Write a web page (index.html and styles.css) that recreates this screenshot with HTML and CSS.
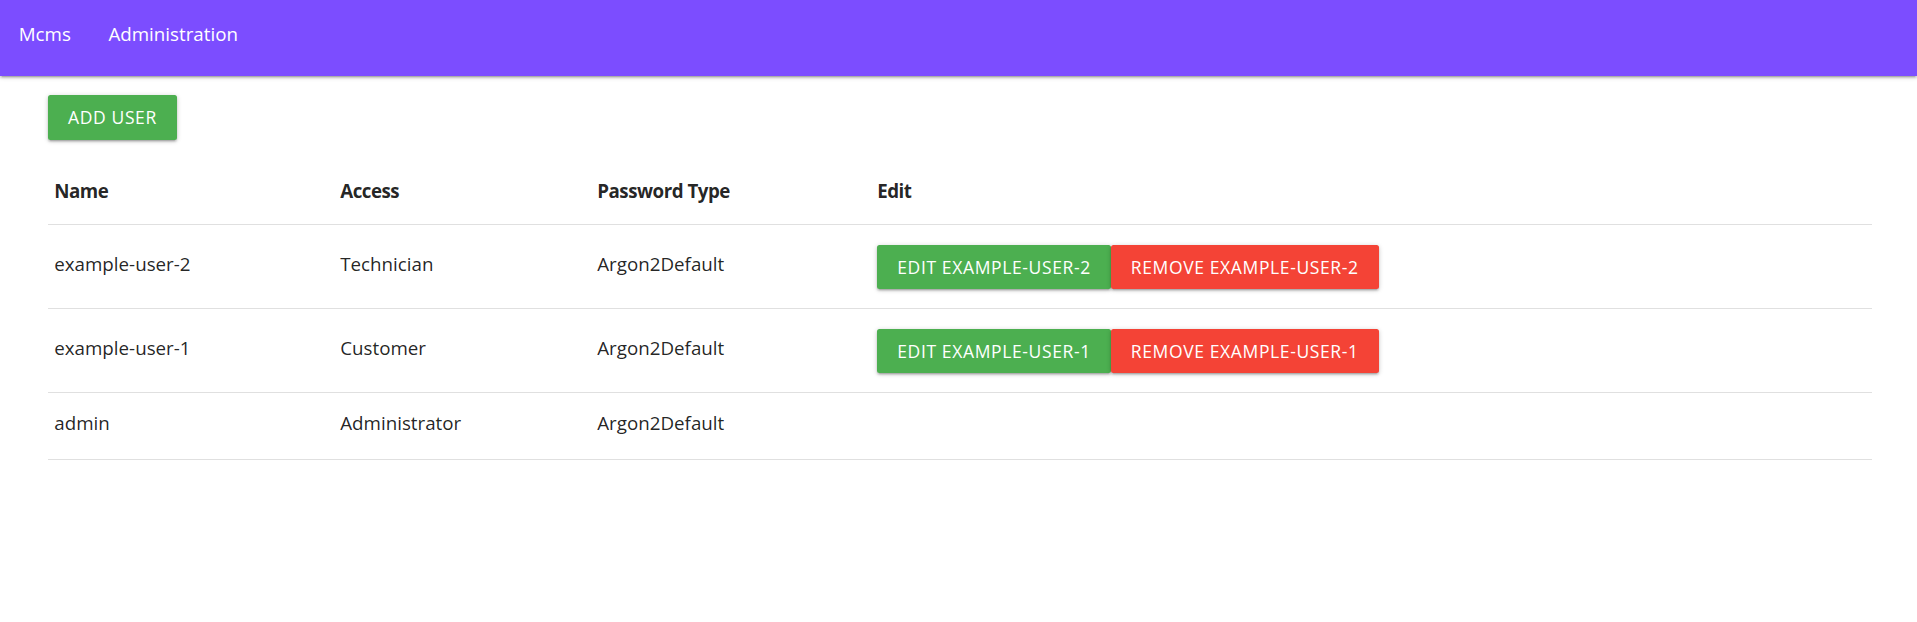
FILE: index.html
```html
<!DOCTYPE html>
<html lang="en">
<head>
<meta charset="utf-8">
<title>Mcms - Administration</title>
<link rel="stylesheet" href="styles.css">
</head>
<body>
<nav class="navbar">
  <a class="nav-link" href="#">Mcms</a>
  <a class="nav-link" href="#">Administration</a>
</nav>
<main class="content">
  <div class="toolbar">
    <button class="btn btn-green">Add user</button>
  </div>
  <table class="users">
    <thead>
      <tr>
        <th class="col-name">Name</th>
        <th class="col-access">Access</th>
        <th class="col-pass">Password Type</th>
        <th class="col-edit">Edit</th>
      </tr>
    </thead>
    <tbody>
      <tr>
        <td class="cell">example-user-2</td>
        <td class="cell">Technician</td>
        <td class="cell">Argon2Default</td>
        <td class="edit-cell"><div class="actions"><button class="btn btn-green">Edit example-user-2</button><button class="btn btn-red">Remove example-user-2</button></div></td>
      </tr>
      <tr>
        <td class="cell">example-user-1</td>
        <td class="cell">Customer</td>
        <td class="cell">Argon2Default</td>
        <td class="edit-cell"><div class="actions"><button class="btn btn-green">Edit example-user-1</button><button class="btn btn-red">Remove example-user-1</button></div></td>
      </tr>
      <tr>
        <td class="cell">admin</td>
        <td class="cell">Administrator</td>
        <td class="cell">Argon2Default</td>
        <td class="edit-cell"></td>
      </tr>
    </tbody>
  </table>
</main>
</body>
</html>
```
FILE: styles.css
```css
* { box-sizing: border-box; }
html, body {
  margin: 0;
  padding: 0;
  background: #ffffff;
  font-family: "Open Sans", "Noto Sans", Arial, sans-serif;
  color: rgba(0, 0, 0, 0.87);
}
.navbar {
  height: 76px;
  background: #7c4dff;
  display: flex;
  align-items: flex-start;
  box-shadow: 0 2px 2px 0 rgba(0,0,0,.14), 0 3px 1px -2px rgba(0,0,0,.12), 0 1px 5px 0 rgba(0,0,0,.2);
}
.nav-link {
  color: #ffffff;
  text-decoration: none;
  font-size: 18.75px;
  line-height: 68px;
  padding: 0 18.75px;
}
.content {
  padding: 19px 45px 0 48px;
}
.toolbar {
  display: flex;
  margin-bottom: 18px;
}
.btn {
  font-family: inherit;
  font-size: 17.5px;
  letter-spacing: 0.625px;
  text-transform: uppercase;
  color: #ffffff;
  border: none;
  border-radius: 2.5px;
  height: 45px;
  line-height: 45px;
  padding: 0 20px;
  cursor: pointer;
  box-shadow: 0 2px 2px 0 rgba(0,0,0,.14), 0 3px 1px -2px rgba(0,0,0,.12), 0 1px 5px 0 rgba(0,0,0,.2);
  white-space: nowrap;
}
.btn-green { background: #4caf50; }
.btn-red { background: #f44336; }
.users {
  width: 100%;
  border-collapse: collapse;
  font-size: 18.75px;
}
.users th, .users td {
  text-align: left;
  padding: 19px 6.25px;
  line-height: 28px;
  vertical-align: middle;
}
.users td.cell { padding: 16px 6.25px 22px; }
.users th { font-weight: 700; letter-spacing: -0.5px; }
.users tr { border-bottom: 1px solid rgba(0, 0, 0, 0.12); }
.col-name { width: 286px; }
.col-access { width: 257px; }
.col-pass { width: 280px; }
.actions {
  display: flex;
  align-items: center;
  height: 45px;
}
.actions .btn { height: 44px; line-height: 44px; }
```
